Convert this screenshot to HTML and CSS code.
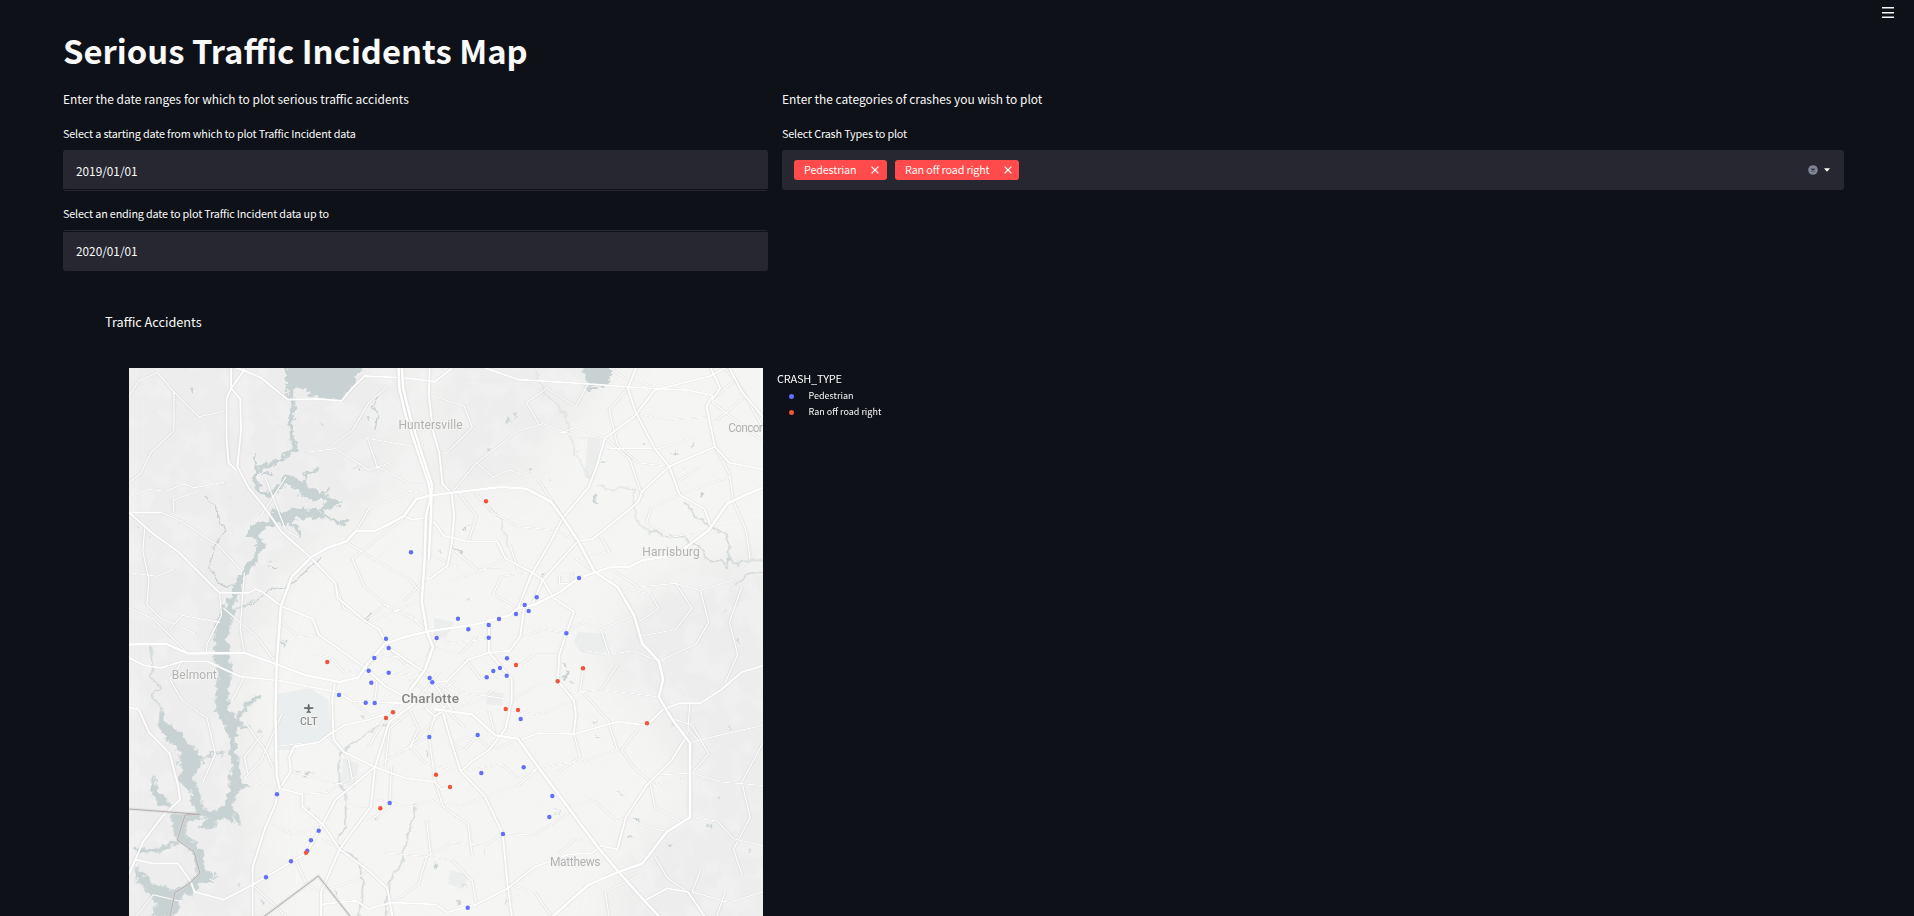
FILE: index.html
```html
<!DOCTYPE html>
<html lang="en">
<head>
<meta charset="utf-8">
<title>Serious Traffic Incidents Map</title>
<link rel="stylesheet" href="styles.css">
</head>
<body>
<header class="toolbar">
  <svg class="menu" width="12" height="12" viewBox="0 0 12 12"><path d="M0 .8h12M0 5.7h12M0 10.2h12"/></svg>
</header>
<main class="page">
  <h1 class="title"><span>Serious Traffic Incidents Map</span></h1>
  <div class="columns">
    <section class="col">
      <p class="intro intro-dates">Enter the date ranges for which to plot serious traffic accidents</p>
      <label class="label label-start">Select a starting date from which to plot Traffic Incident data</label>
      <div class="field line-bottom">2019/01/01</div>
      <label class="label label-end">Select an ending date to plot Traffic Incident data up to</label>
      <div class="field line-top">2020/01/01</div>
    </section>
    <section class="col">
      <p class="intro intro-types">Enter the categories of crashes you wish to plot</p>
      <label class="label label-types">Select Crash Types to plot</label>
      <div class="select">
        <div class="tag tag-a"><span>Pedestrian</span><svg width="8" height="8" viewBox="0 0 8 8"><path d="M.6.6l6.8 6.8M7.4.6L.6 7.4"/></svg></div>
        <div class="tag tag-b"><span>Ran off road right</span><svg width="8" height="8" viewBox="0 0 8 8"><path d="M.6.6l6.8 6.8M7.4.6L.6 7.4"/></svg></div>
        <div class="controls">
          <svg width="10" height="10" viewBox="0 0 10 10"><circle cx="5" cy="5" r="4.8" fill="#808495"/><path d="M3.4 3.6l3.2 2.8M6.6 3.6L3.4 6.4" stroke="#262730" stroke-width="1.2"/></svg>
          <svg width="6" height="4" viewBox="0 0 6 4"><path d="M0 .3h6L3 3.8z" fill="#fafafa"/></svg>
        </div>
      </div>
    </section>
  </div>
  <section class="chart">
    <h2 class="chart-title"><span>Traffic Accidents</span></h2>
    <div class="plot">
      <svg class="map" width="634" height="548" viewBox="129 368 634 548">
        <defs>
          <filter id="shore" x="-10%" y="-10%" width="120%" height="120%">
            <feTurbulence type="fractalNoise" baseFrequency=".16" numOctaves="3" seed="4"/>
            <feDisplacementMap in="SourceGraphic" scale="10" xChannelSelector="R" yChannelSelector="G"/>
          </filter>
          <filter id="creek" x="-10%" y="-10%" width="120%" height="120%">
            <feTurbulence type="fractalNoise" baseFrequency=".12" numOctaves="2" seed="9"/>
            <feDisplacementMap in="SourceGraphic" scale="7" xChannelSelector="R" yChannelSelector="G"/>
          </filter>
          <filter id="land" x="0" y="0" width="100%" height="100%">
            <feTurbulence type="fractalNoise" baseFrequency=".035" numOctaves="4" seed="12"/>
            <feColorMatrix values="0 0 0 0 .91  0 0 0 0 .915  0 0 0 0 .912  5 0 0 0 -2.4"/>
          </filter>
          <filter id="soft" x="-30%" y="-30%" width="160%" height="160%"><feGaussianBlur stdDeviation="18"/></filter>
        </defs>
        <rect x="129" y="368" width="634" height="548" fill="#f5f5f3"/>
        <g fill="#ececec" filter="url(#soft)" opacity=".85">
          <path d="M100 330H420L400 490 290 570 250 680 270 950H100z"/>
          <path d="M430 340H640L560 440 520 490 430 500z"/>
          <path d="M800 540L700 560 640 590 590 660 650 720 690 790 620 860 600 950H800z"/>
        </g>
        <rect x="129" y="368" width="634" height="548" filter="url(#land)" opacity=".45"/>
        <g transform="translate(120 600) scale(.33333)"><path fill="#ebeeee" d="M472 282l98-17 55 35 10 90-35 40-70 2-20 18h-38z"/></g>
        <g fill="#eceeee">
          <path d="M578 632l28 2-2 22-24-4-6-10zM488 691l16 2-2 13-16-2zM588 437l13 2-8 41-9-3zM434 618l20 4-8 16-12-2zM343 758l16 6-4 24-14-6zM450 870l20 5-8 14-14-5z"/>
        </g>

        <g class="water" filter="url(#shore)">
          <g transform="translate(90 300) scale(.33333)">
            <path d="M588 180v85l7 32 12-3 5-24 28-8 25 10-8 20 33-3 15 8 50 3 22-30 23-20-5-20 35-35v-15z"/>
            <path class="s11" d="M605 295l5 35-10 40 7 50 11 25-38 25-50 30-32 10"/>
            <path class="s15" d="M498 510l-3 40 15 25 30 10 30-25 25-18"/>
            <path d="M570 550l25-27 30 20 45 25 20 10 38-22-28 26 52 23-17 20-35 10 20 20 30 10 25-7-10 22-30-8-35-20-40 5-35-3-25 12 28 15 2 35-15-25-25-20-30 2-35 13-25 30-35-10 10-25 35-15 35-10 8-40 22 30 25-20 40 0 48 6 26-32-50 0-30-18-30-22z"/>
            <path class="s8" d="M655 570l-12-25 2-20 38-18M498 508l-5-42M515 523l30-4"/>
            <path class="s18" d="M500 715l15 20-15 35-25 30-25 45-18 45-14 50"/>
            <path d="M300 268l10-4-2 14-5 5zM415 585l8 4-4 6zM265 664l10-4-2 8zM535 785l12 15 16 4-4 6-18-6zM686 372l16 4-6 4zM795 500l12 6-6 5zM830 350l8 6-4 6zM175 708l10 4-4 4zM130 672l10 8-4 2z"/>
          </g>
          <g transform="translate(120 600) scale(.33333)">
            <path d="M330-10h22l-18 60-10 60 6 80 10 20-16 60 2 50 26 50-4 80 16 60-4 60-26 50 8 50-32-20-40 40-30-10 34-44 40-18 12-50 10-60-12-110-34-60-4-60 12-60-18-40 4-80 14-60z"/>
            <path class="s12" d="M345 375l25-50 45-38M350 375l35 10M340 560l45-4M330 620l30 50"/>
            <path d="M122 320l20 50 45 30 15 30 35 30 5 30-25 50 15 10 16 70 40 20-5 25-60-20-10-70-20-10-20-20 15-45-10-40-35-40-30-35z"/>
            <path class="s6" d="M235 490l40-30 38 0"/>
            <path d="M102 520l14 55 34 34-5 15-30-14-20-35z"/>
            <path d="M150 645l90-5 15 10-60 25 10 40 40 35 10 60 40 20-30 5 20 20-50 0-20 25-30 10-20 60H95l15-40-30-40-40-40 10-30 50 50 60 20 25-10 40-30 0-60-10-20-50-40z"/>
            <path class="s12" d="M170 725l-60 28-60-5"/>
            <path d="M485 115l10 14-4 8-8-8zM740 42l10 4-6 14-8-2zM527 511l12 2-6 8zM550 520l28-8-22 16zM560 620l12 6-8 4zM585 644l12 6-8 4zM766 656h14l-6 6zM945 785l10 10-4 14-8-8zM920 455l6 4-2 14-6-6zM640 868l10 10-6 8zM360 850l6 8-6 4zM422 898l10 4-6 8zM720 345l12 4-4 6zM168 482l12 4-8 6zM415 385l10 4-6 6z"/>
          </g>
          <g transform="translate(420 360) scale(.33333)">
            <path d="M497 15h78l2 30-17 12 8 16-28 8-40-10-6-25zM487 84l24-4 20 6-12 8zM252 184l18-8-6 14zM278 164l14-2-6 8zM195 270l20-2-6 6zM320 322l20 8-8 6zM516 410l10-2 6 30-8 0zM130 505l16-12-8 16zM96 560l30 16 4 8-24-10zM664 256l14-6-8 12zM758 282l14-12-4 16zM818 246l8 8-4 8zM838 402l18 2-8 6zM388 354l8 4-6 6zM52 572l10 4-4 4zM786 320l6 4-2 6zM548 302l10 4-8 4zM470 268l10 4-6 4z"/>
          </g>
          <g transform="translate(440 560) scale(.33333)">
            <path d="M370 305l10 2-2 16-6-4zM368 352l14-16 8 6-16 14zM388 360l12 6-6 4zM535 690l16 12-4 8zM583 770l18 10-10 14-4-12zM800 790l18 2-6 10zM685 855l12-8-4 14zM565 825l8 4-6 8zM455 480l20 8-4 6zM470 528l10 2-6 8zM864 500l10 2-4 8zM742 268l8 4-2 8zM890 235l8 6-4 8zM855 148l6 4-6 4zM834 710l12 2-6 6zM342 752l18 0-4 6zM48 1022l12 6-10 8zM195 1018l8 4-6 12zM130 872l8 4-4 8zM925 862l10 8-6 4zM690 486l8 4-4 6zM600 402l12 4-8 2zM305 40l8 2-4 10zM78 118l12-4-6 8zM64 978l22 0-10 6z"/>
          </g>
        </g>
        <g class="creek" filter="url(#creek)">
          <g transform="translate(90 300) scale(.33333)"><path d="M345 595l30 20 13 45 20 30-38 50-12 60 27 50 45 10M695 770l-55 50-40 35-60 15-50 40-35 5M865 290l-15 30 13 30-8 40"/></g>
          <g transform="translate(120 600) scale(.33333)"><path d="M800 370l-60 30-80 60-5 80 20 30 3 110-28 40M890 610l-25 90-20 90-35 50-15 120M650 740l65 40 15 70-15 110M90 140l10 50-10 40 30 30-25 30 35 35M400 0l-50 30-25 55"/></g>
          <g transform="translate(420 360) scale(.33333)"><path d="M690 520l20-8 15 14 35 4 30-2 20 20 30 7 16 40 24 8 28 0 12 18 10-28 20 22 20-14 58 0M795 425l35 45 35 25M880 510l35 10 15 45-5 35M945 672l40-32 43-5"/><path class="faint" d="M530 375l45 15 25-10 45 10-5 40 15 60 35 30M345 30l30 70 60 60 30 120 45 80M205 440l40 40 20 80"/></g>
        </g>

        <g transform="translate(120 360) scale(.41454 .35459)">
          <g class="minor">
            <path d="M22 100L45 60 90 35 130 90 190 160 250 145M130 90V200L75 260 50 320 22 345M22 385L70 365 110 370 155 350 180 360 250 345M22 430L100 430 150 455 205 500 235 520 290 590M130 430L128 395 190 370M350 330L400 480 430 500M400 330L340 440M60 470L55 540 70 620 65 690 100 730 180 770M240 657L245 720 210 800 208 830M250 700L330 780 380 860M120 760L150 720 240 740M300 600L290 760 300 826M22 600L90 610 130 590M22 700L80 730 165 828M150 850L120 900 150 960 210 1010 230 1110 200 1190M300 893L270 960M300 1020L350 1100 370 1150M390 1000L340 1130 300 1180 380 1210M480 775L430 780 390 740M600 740L540 700 520 630M600 740L700 690 730 680M545 512L610 560 700 620 728 660M570 482L600 420 700 370 750 382M690 440L560 560 590 640 650 700 730 740M590 220L640 230 690 240 730 240M600 230L620 300 700 350 740 350M510 240L560 200 600 120 640 80M450 260L520 250 600 310 650 290M750 100L830 130 850 190 790 260 770 260M800 375L860 290 960 200 1020 180 1110 220 1170 220M860 290L900 330 940 310 1010 340 1068 445M1010 180L980 120 1030 80 1100 130 1130 65M1170 220L1100 190 1050 210M1170 220L1230 280 1260 385M1180 250L1300 250 1380 220M1245 150L1320 170 1420 160M1325 300L1250 290 1200 240 1180 140 1225 80M1350 380L1280 420 1270 460 1330 500 1380 490M1435 245L1470 320 1480 400 1510 480 1520 560M1350 380L1420 350 1470 330M1400 300L1350 340M1105 510L1050 480 960 470 900 430 860 380M840 512L860 440 820 380M930 560L860 600 800 620M995 600L920 610 900 660 960 700M1020 620L960 590 940 520M1145 598L1100 560 1180 540 1160 500M1180 585L1250 640 1340 630 1400 650 1480 620M1200 640L1280 660 1300 700 1250 740M1400 650L1420 740 1390 800 1300 850M1340 630L1380 700 1340 760 1250 780M1500 640L1470 740 1490 830 1460 910M1240 720L1160 760 1110 740 1077 770M1160 760L1180 830 1240 820 1300 850M1077 770L1020 760 975 780M1060 830L1000 830 965 860 890 825M1118 870L1110 930 1150 980 1180 1020M1056 905L1000 920 945 960M1180 830L1120 820M1200 860L1160 930 1080 940M1300 950L1230 940 1160 930M1250 1040L1210 1100 1240 1150 1290 1200 1350 1180M1180 1030L1200 1100 1120 1130 1010 1150M1095 1055L1110 1120 1060 1160M1330 1010L1380 1030 1420 1110 1380 1165 1300 1170M1380 1165L1450 1190 1551 1200M1375 1080L1440 1060 1551 1030M1375 968L1370 1040 1400 1080M1551 1080L1500 1190 1520 1290 1480 1380 1500 1450M1375 1290L1440 1300 1480 1350 1551 1370M1290 1400L1320 1460 1370 1500M1350 1300L1290 1260 1280 1200M1220 1290L1280 1320 1320 1330M1080 1260L1140 1240 1200 1300 1220 1290M1150 1370L1100 1350 1060 1390M1010 1150L960 1180 920 1140 822 1160M960 1068L900 1100 850 1060 800 1080M880 1230L960 1200 1010 1150M880 1230L820 1260 760 1240 700 1260 620 1240M923 1335L880 1370 800 1360 740 1400 640 1390M923 1335L1000 1340 1080 1280M935 1480L1000 1500 1040 1568M860 1535L850 1470 800 1410 750 1400 740 1300M740 1400L720 1480 655 1530M760 1190L780 1260 840 1310 850 1400M615 1148L700 1090 720 1040 700 990M640 1148L650 1040 700 990M655 1148L650 1260 600 1300M520 1240L580 1260 605 1260M412 1160L500 1190 560 1200M500 1060L550 1120 560 1180 615 1148M380 1090L440 1080M308 1165L300 1120 340 1060M440 1225L500 1220 550 1180M490 1310L420 1340 370 1310M530 1380L490 1350M600 1440L560 1470 485 1500M420 1400L450 1480 485 1500M320 1480L400 1568M590 735L640 690 700 720 740 765M648 812L690 860 740 840M592 868L620 830 690 840M590 870L540 880 510 840 470 830M606 910L650 880 720 890M614 967L620 910M560 962L600 1000 640 1010M740 765L800 800 890 785M755 810L820 830 860 780M763 785L740 840M780 905L830 940 900 950 945 960M800 985L870 960 900 930M745 1060L700 1090 740 1140 822 1160M862 1060L830 1100 800 1080M760 1000L745 1060 760 1190M905 1058L890 990 930 985 1010 1000 1095 960M835 845L870 900 930 890M1180 1568L1170 1500 1260 1450M1400 1440L1380 1500 1470 1530 1551 1500M1440 1568L1460 1500"/>
            <path d="M700 900l60 55 70 80M725 880l70 60M715 960l55-80M735 985l70-80M755 1010l60-70M600 1090l40-80 40-50M690 1100l80-100M1460 22l40 60 51 110M1430 120l121 110M1480 60l-50 50M1500 110l-60 60M1180 22l40 30 60 20M40 1568l40-60 70 20M1070 600h20v30h-30v-20M730 540l80 40M735 620l-50 60M810 540l50 50 60 0"/>
          </g>
          <g class="road">
            <path d="M747 22L745 100 755 200 770 260 778 350 800 375 806 440 800 520 790 580 750 615 737 615"/>
            <path d="M22 430L80 490 140 540 200 610 240 657 310 657 328 646 345 655 390 695 465 730 480 775 540 825 592 868 640 920 680 945"/>
            <path d="M268 22V80L290 110 292 200 283 300 310 360 345 410 390 485 460 557 520 630 525 670 590 735 625 760 648 812 740 885 760 915 800 985M268 80L257 110V220L262 290 280 310M268 80L300 28"/>
            <path d="M280 22L300 30 340 50 405 112 480 110 535 115 560 80 590 45 680 50 760 60 800 25"/>
            <path d="M960 700L990 610 1040 510 1068 445 1130 360 1150 300 1170 220 1240 160 1290 85 1425 45 1460 22M995 690L1020 620 1105 510 1140 505 1220 430 1250 400 1260 370 1325 300 1435 245"/>
            <path d="M22 840L60 862 100 868 150 850 210 850 290 893 390 905 450 920 520 935 560 962 680 968"/>
            <path d="M660 990L600 1015 540 1030 500 1060 480 1078 420 1090 408 1120 412 1160 385 1208 440 1225 440 1260 490 1310 530 1380 600 1440 645 1490 657 1568"/>
            <path d="M518 915L512 960 515 1070 540 1105 615 1148 690 1180 760 1190 775 1212 796 1206"/>
            <path d="M720 960L650 1020 615 1148 605 1260 560 1330 530 1380 485 1500V1568M180 1500L250 1522 320 1480 450 1390 480 1328 520 1240 615 1148"/>
            <path d="M970 1070L1010 1052 1095 1055 1200 1020 1271 1030 1310 985 1350 968 1400 968 1450 930 1500 880 1551 862"/>
            <path d="M780 1000L800 1080 822 1160 880 1230 923 1335 935 1480 945 1568"/>
            <path d="M485 1535L570 1525 600 1548 655 1530 760 1535 790 1558 860 1535 935 1490 1000 1430 1080 1395 1140 1390 1160 1370 1200 1380 1220 1290 1270 1200 1330 1130 1365 1065"/>
            <path d="M22 980L45 985 70 1050 120 1110 140 1200 145 1240 100 1290 55 1360 22 1450M40 1410L80 1420 140 1420 170 1470 180 1500M320 1568V1430L350 1320 376 1250 380 1210"/>
            <path d="M975 700L965 780 940 820 890 825 840 845 790 905 750 910M890 740V825L945 900V960L930 1040 890 1100 850 1130 822 1160"/>
            <path d="M1020 620L1045 670 1095 710 1077 770 1060 830 1056 905 1095 960 1100 1000 1095 1050"/>
            <path d="M880 22L960 55 1100 65 1280 80 1370 85 1430 100 1415 130 1435 245 1470 290 1551 308M1245 22L1225 80 1245 150 1290 250 1325 300 1350 380 1410 420 1425 470M1425 22L1448 80 1430 110M1470 22L1500 90 1551 160"/>
            <path d="M685 440L705 450 735 445 760 460 780 495 840 512 910 512 930 560 995 600 1020 620M1265 1525L1320 1490 1370 1500 1410 1568M740 985L760 1005 785 985"/>
          </g>
          <g class="highway">
            <path d="M672 22L674 80 690 160 716 250 745 350 750 385 738 440 735 560 728 680 740 765 755 810 735 875 700 930"/>
            <path d="M680 22L683 80 700 160 724 250 752 350 750 440 745 560"/>
            <path d="M385 1208L378 1170 375 1000 378 860 388 695 415 610 460 557 500 530 545 512 570 482 615 482 650 462 685 440 715 392 750 382 830 370 920 358 980 363 1040 400 1068 445 1105 510 1145 598 1200 640 1240 720 1260 800 1300 850 1310 900 1300 950 1330 1010 1375 1080V1290L1320 1330 1260 1420 1200 1445 1130 1480 1045 1568"/>
            <path d="M22 802L110 800 165 828 300 826 370 855 450 890 530 908 575 895 595 860 640 800 690 780 745 765 860 745 940 720 960 700 1000 690 1060 655 1107 615 1180 585 1230 583 1260 565 1340 550 1420 480 1465 405 1500 385 1551 360"/>
            <path d="M760 985L850 1000 905 1058 960 1068 1010 1150 1080 1260 1150 1370 1200 1440 1265 1525 1300 1568"/>
          </g>
        </g>
        <g transform="translate(120 600) scale(.33333)">
          <path class="border-halo" d="M27 627l213 16M240 643l-45 2-23 75 50 35 18 65-35 33-40 25-15 70M425 955L595 828 695 955"/>
          <path class="border" d="M27 627l213 16M240 643l-45 2-23 75 50 35 18 65-35 33-40 25-15 70M425 955L595 828 695 955"/>
          <path fill="#666" d="M566 312c3 0 3 6 3 10h11v4l-11 1-1 6 5 3v2h-14v-2l5-3-1-6-11-1v-4h11c0-4 0-10 3-10z"/>
        </g>

        <g class="place">
          <text x="398.5" y="429" textLength="64">Huntersville</text>
          <text x="728.3" y="431.8" textLength="34.5">Concor</text>
          <text x="642.2" y="555.5" textLength="57.5">Harrisburg</text>
          <text x="171.8" y="679" textLength="45">Belmont</text>
          <text x="550" y="866" textLength="50.5">Matthews</text>
          <text class="code" x="300" y="725" textLength="17.6">CLT</text>
          <text class="city" x="401.5" y="702.8" textLength="57.5">Charlotte</text>
        </g>

        <g class="dots" id="incidents"></g>
      </svg>
      <div class="legend">
        <div class="legend-title"><span>CRASH_TYPE</span></div>
        <div class="legend-row row-a"><i class="dot blue"></i><span>Pedestrian</span></div>
        <div class="legend-row row-b"><i class="dot red"></i><span>Ran off road right</span></div>
      </div>
    </div>
  </section>
</main>
<script src="incidents.js"></script>
</body>
</html>
```

FILE: styles.css
```css
* { box-sizing: border-box; }
html, body { height: 100%; }
body {
  margin: 0;
  height: 916px;
  overflow: hidden;
  background: #0e1117;
  color: #fafafa;
  font-family: "Noto Sans CJK SC", "Noto Sans", sans-serif;
  font-size: 11.95px;
}
.toolbar { height: 19px; padding: 7px 20px 0 0; display: flex; justify-content: flex-end; }
.menu path { stroke: #fafafa; stroke-width: 1.5; }
.page { padding: 0 70px 0 63px; }
.title { margin: 0; height: 70px; font-size: 32.8px; line-height: 61px; font-weight: 700; white-space: nowrap; }
.columns { display: grid; grid-template-columns: 705px 1062px; gap: 14px; }
.col { display: flex; flex-direction: column; }
.intro { margin: 0; height: 34px; line-height: 20px; white-space: nowrap; }
.label { height: 27px; line-height: 20px; font-size: 10.8px; letter-spacing: -.16px; white-space: nowrap; }
.field {
  height: 41px;
  padding-left: 13px;
  line-height: 41px;
  font-size: 11.8px;
  background: #262730;
  border-radius: 3px;
}
.line-bottom { margin-bottom: 12px; background: linear-gradient(#262730 39px, #0e1117 39px, #0e1117 40px, #262730 40px); }
.line-top { background: linear-gradient(#262730 1px, #0e1117 1px, #0e1117 2px, #262730 2px); }
.select {
  display: flex;
  align-items: center;
  gap: 8px;
  height: 40px;
  padding: 0 14px 0 12px;
  background: #262730;
  border-radius: 3px;
}
.tag {
  display: flex;
  align-items: center;
  justify-content: space-between;
  height: 20px;
  padding: 0 8px 0 10px;
  background: #ff4b4b;
  border-radius: 3px;
  font-size: 10.8px;
  letter-spacing: -.16px;
  white-space: nowrap;
}
.tag span { height: 20px; line-height: 18px; }
.tag-a { width: 93px; }
.tag-b { width: 124px; padding-right: 7px; }
.tag path { stroke: #fff; stroke-width: 1.3; }
.controls { display: flex; align-items: center; gap: 6px; margin-left: auto; }
.chart { padding: 41px 0 0 42px; }
.chart-title { margin: 0; height: 56px; line-height: 20px; font-size: 12.7px; font-weight: 400; }
.plot { display: flex; gap: 14px; padding-left: 24px; }
.map { display: block; flex: none; }
.legend { padding-top: 1px; white-space: nowrap; }
.legend-title { height: 19px; line-height: 19px; font-size: 11px; letter-spacing: -.22px; }
.legend-row { display: flex; align-items: center; height: 16px; padding-left: 12px; font-size: 9px; line-height: 16px; }
.dot { width: 5px; height: 5px; margin-right: 14.5px; border-radius: 50%; }
.blue { background: #636efa; fill: #636efa; }
.red { background: #ef553b; fill: #ef553b; }

.map path { stroke-linejoin: round; stroke-linecap: round; }
.water { fill: #c9d2d3; }
.water path[class] { fill: none; stroke: #c9d2d3; }
.s6 { stroke-width: 6; }
.s8 { stroke-width: 8; }
.s11 { stroke-width: 11; }
.s12 { stroke-width: 12; }
.s15 { stroke-width: 14; }
.s18 { stroke-width: 17; }
.creek path { fill: none; stroke: #c6cfd0; stroke-width: 3.5; }
.creek .faint { stroke: #dde1e1; }
.minor path { fill: none; stroke: #fff; stroke-width: 1.1; vector-effect: non-scaling-stroke; }
.minor { filter: drop-shadow(0 0 2px #c9c9c9); }
.road path { fill: none; stroke: #fff; stroke-width: 1.8; vector-effect: non-scaling-stroke; }
.road { filter: drop-shadow(0 0 2px #cfcfcf); }
.highway path { fill: none; stroke: #fff; stroke-width: 2.5; vector-effect: non-scaling-stroke; }
.highway { filter: drop-shadow(0 0 2px #cfcfcf); }
.border-halo { fill: none; stroke: #d9d8d8; stroke-width: 9; opacity: .6; }
.border { fill: none; stroke: #b5b0b0; stroke-width: 3; }
.place text {
  font-family: Roboto, sans-serif;
  font-size: 12px;
  fill: #b2b2b2;
  stroke: #f4f4f3;
  stroke-width: 1.5px;
  paint-order: stroke;
}
.place .code { font-size: 10.5px; font-weight: 500; fill: #919191; }
.place .city { font-size: 13.5px; font-weight: 500; fill: #858585; }
```

FILE: incidents.js
```js
// Incident positions: [x, y] in map units, grouped by crash type.
const third = (ox, oy, pts) => pts.map(([x, y]) => [ox + x / 3, oy + y / 3]);
const incidents = {
  blue: [
    ...third(120, 600, [[798,116],[806,144],[763,174],[746,212],[806,218],[754,248],[657,285],[737,308],[764,309],[950,114],[929,234],[937,247],[928,411],[471,583],[809,609],[596,692],[573,721],[562,752],[513,784],[438,832]]),
    ...third(440, 560, [[417,54],[290,112],[254,135],[266,153],[228,162],[177,177],[146,195],[85,208],[54,176],[146,233],[379,220],[201,295],[180,324],[160,333],[140,352],[200,347],[242,477],[113,525],[251,622],[124,639],[337,708],[328,771],[189,822],[83,1043]]),
    ...third(90, 300, [[963,757]])
  ],
  red: [
    ...third(120, 600, [[622,186],[819,337],[798,354],[948,524],[990,561],[781,625],[558,758]]),
    ...third(440, 560, [[228,315],[429,325],[353,364],[197,447],[234,450],[621,490]]),
    ...third(420, 360, [[198,424]])
  ]
};
const layer = document.getElementById("incidents");
for (const [kind, points] of Object.entries(incidents)) {
  for (const [x, y] of points) {
    const c = document.createElementNS("http://www.w3.org/2000/svg", "circle");
    c.setAttribute("class", kind);
    c.setAttribute("cx", x.toFixed(1));
    c.setAttribute("cy", y.toFixed(1));
    c.setAttribute("r", "2.2");
    layer.appendChild(c);
  }
}
```
